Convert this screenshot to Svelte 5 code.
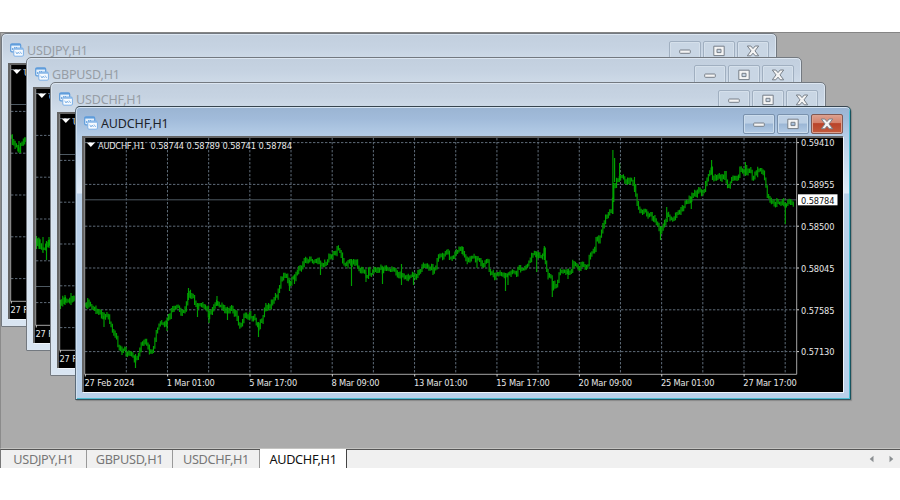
<script lang="ts">
	/**
	 * Trading terminal workspace: cascaded MDI chart windows over a grey
	 * desktop, with the chart tabs underneath. All four charts share one
	 * plot coordinate system; only the series and price line differ.
	 */

	interface ChartWindow {
		readonly symbol: string;
		readonly x: number;
		readonly y: number;
		readonly priceY: number;
		/** Flat list of x, y pairs tracing the middle of the bars. */
		readonly series: readonly number[];
		/** Individual long bars: x, high, low. */
		readonly spikes: readonly (readonly [number, number, number])[];
	}

	const audchf = [
		85, 306, 88, 303, 93, 308, 97, 312, 101, 314, 104, 319, 107, 313, 110, 323, 113, 332, 116, 335,
		118, 345, 121, 350, 124, 348, 127, 353, 131, 355, 134, 357, 138, 357, 141, 346, 144, 340, 147, 343,
		149, 352, 152, 353, 154, 347, 156, 333, 159, 325, 163, 323, 166, 322, 169, 318, 172, 312, 175, 308,
		177, 305, 179, 308, 181, 313, 184, 310, 186, 303, 188, 294, 190, 295, 193, 298, 196, 306, 200, 303,
		203, 305, 206, 308, 209, 317, 212, 310, 214, 305, 217, 300, 220, 305, 223, 308, 227, 309, 232, 308,
		236, 315, 239, 323, 241, 326, 244, 315, 247, 317, 250, 315, 253, 318, 256, 323, 259, 326, 262, 320,
		265, 308, 268, 306, 271, 305, 274, 298, 277, 297, 279, 290, 281, 280, 283, 276, 286, 278, 289, 283,
		292, 280, 295, 277, 297, 270, 300, 270, 303, 263, 306, 260, 309, 261, 312, 260, 316, 260, 319, 264,
		321, 267, 324, 264, 327, 261, 330, 257, 332, 255, 335, 253, 337, 250, 340, 253, 342, 259, 345, 265,
		348, 263, 350, 262, 354, 262, 356, 263, 359, 270, 362, 269, 364, 273, 366, 278, 369, 270, 371, 275,
		374, 270, 377, 269, 380, 270, 386, 269, 390, 269, 393, 269, 396, 273, 399, 275, 405, 277, 408, 277,
		411, 275, 417, 276, 420, 270, 423, 267, 427, 267, 430, 268, 433, 270, 436, 264, 438, 258, 441, 256,
		445, 255, 448, 253, 451, 257, 454, 255, 457, 252, 460, 249, 462, 249, 464, 257, 467, 260, 470, 258,
		474, 258, 477, 259, 480, 263, 483, 266, 486, 263, 488, 261, 490, 275, 493, 275, 496, 276, 499, 272,
		502, 275, 504, 274, 508, 276, 511, 273, 514, 273, 517, 272, 520, 268, 522, 267, 524, 272, 527, 265,
		530, 260, 532, 255, 534, 251, 536, 253, 539, 255, 542, 255, 544, 252, 545.5, 263, 547, 275, 549, 279,
		550.5, 275, 552, 289, 554, 283, 557, 286, 559, 273, 562, 272, 566, 272, 568, 273, 571, 272, 573, 263,
		575, 265, 578, 268, 581, 265, 584, 267, 587, 266, 589, 260, 592, 254, 594, 252, 596, 238, 598, 240,
		601, 236, 603, 223, 605, 220, 607, 214, 610, 209, 612, 210, 613, 190, 616, 180, 618, 178, 622, 178,
		625, 180, 629, 182, 632, 182, 634, 183, 636, 197, 638, 208, 641, 214, 644, 208, 646, 213, 649, 215,
		652, 218, 655, 218, 658, 225, 660, 234, 662, 228, 665, 223, 667, 212, 670, 220, 672, 222, 675, 218,
		677, 215, 680, 212, 683, 207, 687, 202, 690, 199, 693, 196, 696, 193, 698, 189, 701, 194, 704, 190,
		707, 181, 709, 172, 711, 169, 713, 179, 716, 175, 719, 177, 722, 177, 725, 175, 727, 187, 729, 187,
		731, 182, 735, 178, 738, 177, 740, 168, 743, 172, 745, 169, 747, 173, 750, 171, 753, 179, 756, 173,
		759, 170, 762, 170, 764, 173, 766, 187, 768, 200, 770, 201, 773, 202, 775, 204, 778, 201, 781, 201,
		784, 203, 787, 205, 789, 202, 791, 204, 794, 201
	];

	const windows: readonly ChartWindow[] = [
		{
			symbol: 'USDJPY,H1',
			x: 1,
			y: 33,
			priceY: 177.5,
			series: [85, 211, 88, 218, 91, 220, 93, 224, 95, 217, 98, 214, 101, 214],
			spikes: [[93, 214, 226]]
		},
		{
			symbol: 'GBPUSD,H1',
			x: 26,
			y: 57,
			priceY: 335.5,
			series: [85, 291, 88, 292, 91, 299, 94, 296, 97, 292, 101, 293],
			spikes: [[85.5, 285, 298], [88, 287, 298], [92, 286, 302], [95.5, 290, 309], [98, 286, 297]]
		},
		{
			symbol: 'USDCHF,H1',
			x: 50,
			y: 82,
			priceY: 178.5,
			series: [85, 327, 88, 325, 91, 324, 94, 325, 97, 323, 101, 324],
			spikes: [[85.5, 324, 333], [90, 319, 329], [96, 317, 329]]
		},
		{
			symbol: 'AUDCHF,H1',
			x: 75,
			y: 106,
			priceY: 199.8,
			series: audchf,
			spikes: [
				[104, 316, 327], [135.5, 354, 368], [167, 318, 331], [188.5, 288, 300], [197.5, 303, 317],
				[209, 314, 323], [217, 296, 305], [227.5, 307, 320], [258.5, 322, 337], [289.5, 280, 291],
				[294.5, 277, 284], [320.5, 265, 275], [351.5, 259, 286], [366, 273, 282], [382.5, 268, 284],
				[401.5, 264, 285], [413.5, 275, 285], [462, 246, 254], [477, 258, 268], [505.5, 273, 291],
				[508, 274, 285], [536.7, 252, 272], [544.3, 246, 260], [552.3, 278, 297], [568, 271, 279],
				[612.9, 150, 214], [614.6, 158, 182], [619.6, 163, 180], [634.5, 177, 192], [660.5, 226, 240],
				[666.7, 207, 218], [691.3, 197, 209], [711.6, 160, 174], [745.4, 162, 176], [785.3, 203, 224]
			]
		}
	];

	const times = [
		'27 Feb 2024', '1 Mar 01:00', '5 Mar 17:00', '8 Mar 09:00', '13 Mar 01:00',
		'15 Mar 17:00', '20 Mar 09:00', '25 Mar 01:00', '27 Mar 17:00'
	].map((label, i) => ({
		label,
		x: 84.8 + i * 82.35,
		width: i === 0 ? 50 : i < 4 ? 48 : 53.5
	}));

	const prices = ['0.59410', '0.58955', '0.58500', '0.58045', '0.57585', '0.57130'].map(
		(label, i) => ({ label, y: 142.6 + i * 41.8 })
	);

	const columns = Array.from({ length: 17 }, (_, i) => 126.3 + i * 41.18);

	// Repeatable 0..1 noise.
	function noise(n: number, seed: number): number {
		return Math.abs(Math.sin(n * seed) * 43758.5453) % 1;
	}

	// One vertical stroke per hourly bar; each bar reaches back to the previous
	// one so steep moves stay connected.
	function bars(win: ChartWindow): string {
		const s = win.series;
		let d = '';
		let k = 0;
		let n = 0;
		let last = s[1];
		for (let x = s[0]; x <= s[s.length - 2]; x += 1.37, n++) {
			while (k < s.length - 4 && s[k + 2] < x) k += 2;
			const t = (x - s[k]) / (s[k + 2] - s[k]);
			const y = s[k + 1] + (s[k + 3] - s[k + 1]) * t + (noise(n, 12.9898) - 0.5) * 5;
			const high = Math.min(y, last) - 0.8 - noise(n, 78.233) * 2.4;
			const low = Math.max(y, last) + 0.8 + noise(n, 39.425) * 2.4;
			d += `M${x.toFixed(2)} ${high.toFixed(1)}V${low.toFixed(1)}`;
			last = y;
		}
		for (const [x, high, low] of win.spikes) d += `M${x} ${high}V${low}`;
		return d;
	}

	let active = $state('AUDCHF,H1');
</script>

{#snippet chart(win: ChartWindow)}
	<svg class="chart" viewBox="82 136 761 256" width="761" height="256">
		<rect x="82" y="136" width="761" height="256" fill="#000" />
		<path class="bevel" d="M83 392V137H843" />
		<g class="grid">
			{#each columns as x}
				<line x1={x} x2={x} y1="138" y2="374" />
			{/each}
			{#each prices as p}
				<line x1="85" x2="796" y1={p.y} y2={p.y} />
			{/each}
		</g>
		<line class="price" x1="85" x2="797" y1={win.priceY} y2={win.priceY} />
		<path class="bars" d={bars(win)} />
		<path class="axis" d="M84.7 138V374.3H796.7V138" />
		{#each times as t}
			<line class="tick" x1={t.x + 0.5} x2={t.x + 0.5} y1="374" y2="376.5" />
			<text x={t.x - 0.3} y="386" textLength={t.width}>{t.label}</text>
		{/each}
		{#each prices as p}
			<line class="tick" x1="797" x2="799" y1={p.y} y2={p.y} />
			<text x="801" y={p.y + 3.7} textLength="33.5">{p.label}</text>
		{/each}
		<rect x="798" y="194.3" width="39.5" height="11" fill="#fff" />
		<text class="current" x="801" y="203.5" textLength="33.5">0.58784</text>
		<path d="M86.7 142.6H95L90.8 147Z" fill="#fff" />
		<text x="98" y="149.3" textLength="47">{win.symbol}</text>
		<text x="150.5" y="149.3" textLength="141.5">0.58744 0.58789 0.58741 0.58784</text>
	</svg>
{/snippet}

<main class="terminal">
	<section class="workspace">
		{#each windows as win (win.symbol)}
			<article
				class="window"
				class:active={win.symbol === 'AUDCHF,H1'}
				style:left="{win.x}px"
				style:top="{win.y - 32}px"
			>
				<header class="titlebar">
					<svg class="icon" width="14" height="14" viewBox="0 0 14 14" aria-hidden="true">
						<rect x="0.7" y="0.9" width="10" height="8" rx="1.3" fill="#e6f1fc" stroke="#5c9bdb" stroke-width="1.2" />
						<path d="M1 1.8H10.5" stroke="#5c9bdb" stroke-width="1.5" />
						<path d="M2.7 7V5M4.7 6V4M6.5 5.5V4" stroke="#5c9bdb" />
						<rect x="3.8" y="5" width="9.6" height="8.2" rx="1.2" fill="#f7fbff" stroke="#7db0e6" />
						<path d="M4.2 6H13" stroke="#6ca6e1" stroke-width="1.2" />
						<path d="M5.7 8.7L7 11L8.3 9L9.5 11M10 8.5L11.7 11" fill="none" stroke="#6ca6e1" stroke-width="0.8" />
					</svg>
					<h2>{win.symbol}</h2>
					<div class="controls">
						<button aria-label="Minimize">
							<svg width="14" height="14" viewBox="0 0 14 14"><rect x="1.7" y="6" width="10.6" height="3.3" rx="0.7" /></svg>
						</button>
						<button aria-label="Maximize">
							<svg width="14" height="14" viewBox="0 0 14 14"><path d="M1.8 2.2H12.2V11.6H1.8ZM5 5.3V8.6H9V5.3Z" fill-rule="evenodd" /></svg>
						</button>
						<button class="close" aria-label="Close">
							<svg width="14" height="14" viewBox="0 0 14 14"><path d="M1.3 2H4.8L7 4.6L9.2 2H12.7L9 6.9L12.7 11.8H9.2L7 9.2L4.8 11.8H1.3L5 6.9Z" /></svg>
						</button>
					</div>
				</header>
				{@render chart(win)}
			</article>
		{/each}
	</section>

	<nav class="tabs">
		{#each windows as win (win.symbol)}
			<button
				class="tab"
				class:selected={active === win.symbol}
				onclick={() => (active = win.symbol)}>{win.symbol}</button
			>
		{/each}
		<div class="scroll">
			<svg width="26" height="8" viewBox="0 0 26 8" aria-hidden="true">
				<path d="M4.5 0.7V7.3L0.7 4ZM20.5 0.7V7.3L24.3 4Z" fill="#8b8f92" />
			</svg>
		</div>
	</nav>
</main>

<style>
	:global(body) {
		background: #fff;
	}
	.terminal {
		width: 900px;
		height: 500px;
		box-sizing: border-box;
		padding-top: 32px;
		overflow: hidden;
		font-family: 'Noto Sans', 'Open Sans', sans-serif;
	}
	.workspace {
		position: relative;
		height: 417px;
		box-sizing: border-box;
		background: #ababab;
		border-top: 1px solid #858585;
		border-left: 1px solid #8b8b8b;
		border-bottom: 1px solid #c4c4c2;
	}

	.window {
		position: absolute;
		/* Cancels the workspace's own 1px frame. */
		margin: -1px 0 0 -1px;
		width: 776px;
		height: 294px;
		box-sizing: border-box;
		border: 1px solid #737980;
		border-radius: 5px 5px 1px 1px;
		padding: 0 6px;
		background: linear-gradient(#c2cfde 0, #c6d3e2 14px, #d2deeb 30px, #d9e5f2 100%);
		box-shadow: inset 0 0 0 1px #dce6f1;
	}
	.window.active {
		border-color: #37454f #17545f #33545f #5b6b79;
		background: linear-gradient(#9ab4d2 0, #a1bbda 12px, #b5cde7 29px, #dfebf8 86px, #b9d0e9 87px);
		box-shadow:
			inset 0 1px #d3e2f1,
			inset 1px 0 #cfdfef,
			inset -1px -1px #4bbbd0,
			1px 1px 1px #888;
	}
	.titlebar {
		display: flex;
		align-items: center;
		height: 29px;
		box-sizing: border-box;
		padding-left: 2px;
	}
	.icon {
		margin-top: 3px;
	}
	h2 {
		margin: 5px 0 0 3px;
		font-size: 12.5px;
		font-weight: 400;
		line-height: 18px;
		letter-spacing: -0.15px;
		color: #969da5;
	}
	.active h2 {
		color: #1d232a;
	}
	.controls {
		display: flex;
		gap: 1.5px;
		margin: 5px 1px 0 auto;
	}
	.controls button {
		display: grid;
		place-items: center;
		width: 32.3px;
		height: 20px;
		padding: 0;
		border: 1px solid #a0afc0;
		border-radius: 2px;
		background: #c9d6e4;
		box-shadow: inset 0 0 0 1px #d5e0eb;
	}
	.controls svg {
		fill: #f4f4f4;
		stroke: #777f88;
		stroke-width: 1;
	}
	.active .controls button {
		border-color: #7991ad;
		background: linear-gradient(#bdd0e5 45%, #9bb6d5 50%, #b3cbe5);
		box-shadow: inset 0 0 0 1px #cbdcec;
	}
	.active .controls .close {
		border-color: #805954;
		background: linear-gradient(#dca08f 0, #d5826c 42%, #b9432a 48%, #c35a3c 100%);
		box-shadow: inset 0 0 0 1px #dda18e;
	}

	.chart {
		display: block;
		box-shadow: 1px 1px #f0f5fb;
	}
	.chart text {
		fill: #e6e6e6;
		font-family: 'DejaVu Sans Condensed', 'DejaVu Sans', 'Noto Sans', sans-serif;
		font-stretch: condensed;
		font-size: 9.2px;
	}
	.chart .current {
		fill: #111;
	}
	.bevel {
		fill: none;
		stroke: #646464;
		stroke-width: 2;
	}
	.grid line {
		stroke: #5e6b78;
		stroke-width: 1;
		stroke-dasharray: 2.4 1.6;
	}
	.price {
		stroke: #4e5962;
		stroke-width: 1;
	}
	.bars {
		fill: none;
		stroke: #00a000;
		stroke-width: 1.15;
	}
	.axis {
		fill: none;
		stroke: #a6a6a6;
		stroke-width: 1;
	}
	.tick {
		stroke: #d0d0d0;
	}

	.tabs {
		display: flex;
		height: 19px;
		box-sizing: border-box;
		background: #f0f0f0;
		border-top: 1px solid #555;
		border-left: 1px solid #777;
	}
	.tab {
		box-sizing: border-box;
		width: 86px;
		padding: 0;
		border: 0;
		border-right: 1px solid #999;
		background: none;
		font: 12.7px/18px 'Noto Sans', 'Open Sans', sans-serif;
		letter-spacing: -0.3px;
		color: #777;
	}
	.tab:nth-child(3) {
		width: 87px;
	}
	.tab.selected {
		width: 87px;
		margin-top: -1px;
		padding-top: 1px;
		background: #fff;
		border-right-color: #444;
		color: #111;
	}
	.scroll {
		display: flex;
		align-items: center;
		margin: 0 5px 0 auto;
	}
</style>
